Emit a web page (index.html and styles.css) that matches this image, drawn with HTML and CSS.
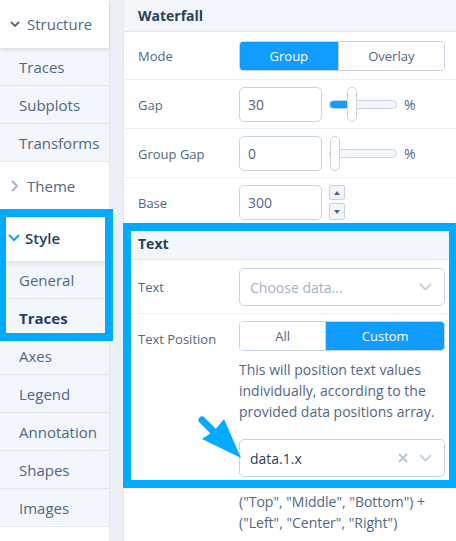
FILE: index.html
```html
<!DOCTYPE html>
<html lang="en">
<head>
<meta charset="utf-8">
<title>Editor</title>
<link rel="stylesheet" href="styles.css">
</head>
<body>
<div class="app">
  <nav class="sidebar">
    <section class="group">
      <div class="group-head group-head--open">
        <svg class="chev" width="10" height="7" viewBox="0 0 10 7"><polyline points="1,1 5,5 9,1" fill="none" stroke="#506784" stroke-width="1.8"/></svg>
        <span>Structure</span>
      </div>
      <div class="item">Traces</div>
      <div class="item">Subplots</div>
      <div class="item">Transforms</div>
    </section>
    <section class="group">
      <div class="group-head">
        <svg class="chev" width="10" height="12" viewBox="0 0 10 12"><polyline points="2,1 7,6 2,11" fill="none" stroke="#a2b1c6" stroke-width="1.8"/></svg>
        <span>Theme</span>
      </div>
    </section>
    <section class="group">
      <div class="group-head group-head--open group-head--active">
        <svg class="chev" width="12" height="8" viewBox="0 0 12 8"><polyline points="1,1 6,6 11,1" fill="none" stroke="#119dff" stroke-width="2"/></svg>
        <span>Style</span>
      </div>
      <div class="item">General</div>
      <div class="item item--selected">Traces</div>
      <div class="item">Axes</div>
      <div class="item">Legend</div>
      <div class="item">Annotation</div>
      <div class="item">Shapes</div>
      <div class="item">Images</div>
    </section>
  </nav>
  <div class="gutter"></div>
  <main class="panel">
    <div class="fold-title">Waterfall</div>
    <div class="field">
      <div class="label">Mode</div>
      <div class="control">
        <div class="radio">
          <button class="radio-btn radio-btn--on">Group</button>
          <button class="radio-btn">Overlay</button>
        </div>
      </div>
    </div>
    <div class="field field--input">
      <div class="label">Gap</div>
      <div class="control row">
        <div class="num">30</div>
        <div class="slider">
          <div class="track"><div class="fill" style="width:23px"></div></div>
          <div class="handle" style="left:18px"></div>
        </div>
        <span class="unit">%</span>
      </div>
    </div>
    <div class="field field--input">
      <div class="label">Group Gap</div>
      <div class="control row">
        <div class="num">0</div>
        <div class="slider">
          <div class="track"></div>
          <div class="handle" style="left:1px"></div>
        </div>
        <span class="unit">%</span>
      </div>
    </div>
    <div class="field field--input field--base">
      <div class="label">Base</div>
      <div class="control row">
        <div class="num">300</div>
        <div class="spin">
          <div class="spin-btn"><svg width="6" height="4" viewBox="0 0 6 4"><polygon points="0,4 3,0 6,4" fill="#506784"/></svg></div>
          <div class="spin-btn"><svg width="6" height="4" viewBox="0 0 6 4"><polygon points="0,0 6,0 3,4" fill="#506784"/></svg></div>
        </div>
      </div>
    </div>
    <div class="fold-title">Text</div>
    <div class="field field--select">
      <div class="label">Text</div>
      <div class="control">
        <div class="select">
          <span class="placeholder">Choose data...</span>
          <svg class="dd" width="13" height="8" viewBox="0 0 13 8"><polyline points="1,1 6.5,6.5 12,1" fill="none" stroke="#c8d4e3" stroke-width="2"/></svg>
        </div>
      </div>
    </div>
    <div class="field field--top">
      <div class="label label--top">Text Position</div>
      <div class="control">
        <div class="radio">
          <button class="radio-btn">All</button>
          <button class="radio-btn radio-btn--on">Custom</button>
        </div>
        <p class="desc">This will position text values individually, according to the provided data positions array.</p>
        <div class="select select--value">
          <span class="value">data.1.x</span>
          <svg class="clear" width="10" height="10" viewBox="0 0 10 10"><path d="M1 1 L9 9 M9 1 L1 9" stroke="#b9c6d8" stroke-width="2.2"/></svg>
          <svg class="dd" width="13" height="8" viewBox="0 0 13 8"><polyline points="1,1 6.5,6.5 12,1" fill="none" stroke="#c8d4e3" stroke-width="2"/></svg>
        </div>
        <p class="desc desc--after">("Top", "Middle", "Bottom") + ("Left", "Center", "Right")</p>
      </div>
    </div>
  </main>
  <div class="highlight highlight--style"></div>
  <div class="highlight highlight--text"></div>
  <svg class="pointer" width="456" height="541" viewBox="0 0 456 541">
    <line x1="202" y1="420" x2="217" y2="435" stroke="#00aaff" stroke-width="7" stroke-linecap="round"/>
    <polygon points="241,458 202,439 214,431 224,419" fill="#00aaff"/>
  </svg>
</div>
</body>
</html>
```

FILE: styles.css
```css
* { box-sizing: border-box; }
html, body { margin: 0; padding: 0; }
body {
  font-family: "Open Sans", "Liberation Sans", sans-serif;
  color: #506784;
  background: #fff;
  width: 456px;
  height: 541px;
  overflow: hidden;
}
.app {
  position: relative;
  display: flex;
  width: 456px;
  height: 541px;
}
.sidebar {
  width: 110px;
  flex: none;
  background: #fff;
  border-right: 1px solid #dfe8f3;
}
.group-head {
  display: flex;
  align-items: center;
  gap: 7px;
  height: 48px;
  padding-left: 10px;
  font-size: 15px;
  background: #fff;
  position: relative;
}
.group-head--open { box-shadow: 0 2px 4px rgba(80, 103, 132, 0.18); z-index: 1; }
.group-head--active {
  height: 51px;
  padding-top: 4px;
  padding-left: 8px;
  gap: 5px;
  color: #2a3f5f;
  font-weight: 600;
}
.chev { flex: none; }
.item {
  height: 38px;
  display: flex;
  align-items: center;
  padding-left: 19px;
  font-size: 15px;
  background: #f3f6fa;
  border-bottom: 1px solid #dfe8f3;
}
.item--selected { color: #2a3f5f; font-weight: 700; }
.gutter {
  width: 13px;
  flex: none;
  background: #ebf0f8;
}
.panel {
  flex: 1;
  border-left: 1px solid #dfe8f3;
  background: #fff;
}
.fold-title {
  height: 32px;
  display: flex;
  align-items: center;
  padding-left: 14px;
  font-size: 14px;
  font-weight: 700;
  color: #2a3f5f;
  background: #f3f6fa;
  border-bottom: 1px solid #dfe8f3;
}
.field {
  display: flex;
  align-items: center;
  padding: 9px 11px 8px 14px;
  border-bottom: 1px solid #ebf0f8;
}
.field--input { padding: 7px 11px 6px 14px; }
.field--base { padding-bottom: 7px; }
.field--select { padding: 8px 11px 7px 14px; }
.field--top { align-items: flex-start; padding-top: 7px; border-bottom: none; }
.label {
  width: 101px;
  flex: none;
  font-size: 13px;
}
.label--top { line-height: 30px; padding-top: 3px; }
.control { flex: 1; min-width: 0; }
.row { display: flex; align-items: center; }
.radio {
  display: flex;
  height: 30px;
  border: 1px solid #c8d4e3;
  border-radius: 4px;
  overflow: hidden;
}
.radio-btn {
  flex: 1 1 auto;
  padding: 0;
  border: none;
  background: #fff;
  font-family: inherit;
  font-size: 13px;
  color: #506784;
}
.radio-btn + .radio-btn { border-left: 1px solid #c8d4e3; }
.radio-btn--on { background: #119dff; color: #fff; border-color: #0d89e0; }
.num {
  width: 83px;
  height: 35px;
  border: 1px solid #c8d4e3;
  border-radius: 5px;
  padding-left: 8px;
  display: flex;
  align-items: center;
  font-size: 14px;
  color: #506784;
}
.slider {
  position: relative;
  width: 68px;
  height: 35px;
  margin-left: 7px;
  display: flex;
  align-items: center;
}
.track {
  width: 100%;
  height: 9px;
  border: 1px solid #c8d4e3;
  border-radius: 5px;
  background: #f3f6fa;
  overflow: hidden;
}
.fill { height: 100%; background: #119dff; }
.handle {
  position: absolute;
  top: 0;
  width: 10px;
  height: 35px;
  border: 1px solid #c8d4e3;
  border-radius: 5px;
  background: #fff;
}
.unit { margin-left: 7px; font-size: 14px; }
.spin {
  display: flex;
  flex-direction: column;
  gap: 3px;
  margin-left: 7px;
}
.spin-btn {
  width: 16px;
  height: 15px;
  border: 1px solid #c8d4e3;
  border-radius: 2px;
  background: #f3f6fa;
  display: flex;
  align-items: center;
  justify-content: center;
}
.spin-btn + .spin-btn { height: 17px; }
.select {
  display: flex;
  align-items: center;
  height: 38px;
  border: 1px solid #c8d4e3;
  border-radius: 5px;
  padding: 0 12px 0 10px;
  font-size: 14px;
}
.placeholder { flex: 1; color: #a2b1c6; }
.value { flex: 1; color: #2a3f5f; }
.clear { margin-right: 11px; }
.select--value { margin-top: 17px; }
.desc {
  margin: 8px 0 0;
  font-size: 14px;
  line-height: 21px;
}
.desc--after { margin-top: 14px; }
.highlight {
  position: absolute;
  z-index: 5;
  border: 8px solid #00aaff;
  pointer-events: none;
}
.highlight--style { left: -2px; top: 209px; width: 115px; height: 132px; }
.highlight--text { left: 123px; top: 223px; width: 334px; height: 265px; }
.pointer { position: absolute; z-index: 6; left: 0; top: 0; pointer-events: none; }
```
